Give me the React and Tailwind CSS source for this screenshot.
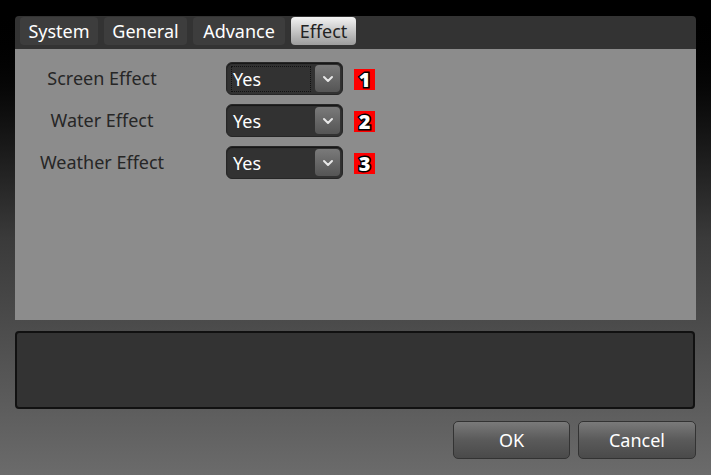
import { ChevronDown } from 'lucide-react'

const tabs = ['System', 'General', 'Advance', 'Effect']
const tabWidths = { System: 'w-[78px]', General: 'w-[83px]', Advance: 'w-[92px]', Effect: 'w-[65px]' }

const rows = [
  { label: 'Screen Effect', value: 'Yes', n: '1', focused: true },
  { label: 'Water Effect', value: 'Yes', n: '2' },
  { label: 'Weather Effect', value: 'Yes', n: '3' }
]

function Select({ value, focused }) {
  return (
    <div className="w-[117px] h-[33px] rounded-[6px] bg-[#323232] border border-[#262626] shadow-[inset_0_1px_1px_rgba(0,0,0,0.6)] flex flex-row items-center pl-[4px] pr-[2px]">
      <div
        className={`flex-1 h-[26px] flex items-center pl-[1px] ${focused ? 'border border-dotted border-[#111]' : 'border border-transparent'}`}
      >
        <span className="text-white text-[18px] leading-none">{value}</span>
      </div>
      <div className="ml-[4px] w-[25px] h-[27px] rounded-[4px] bg-linear-to-b from-[#7a7a7a] to-[#555] flex items-center justify-center">
        <ChevronDown className="text-[#e8e8e8]" size={16} strokeWidth={3} />
      </div>
    </div>
  )
}

function Badge({ n }) {
  return (
    <div className="w-[21px] h-[21px] bg-[#ff0000] flex items-center justify-center">
      <span className="text-white font-black text-[20px] leading-none [-webkit-text-stroke:3px_#000] [paint-order:stroke_fill]">
        {n}
      </span>
    </div>
  )
}

export default function App() {
  return (
    <div className="w-[711px] h-[475px] bg-linear-to-b from-[#000] via-[#3a3a3a] to-[#6b6b6b] pt-[16px] pl-[15px] pr-[15px] font-['Noto_Sans','Liberation_Sans',sans-serif] overflow-hidden">
      <div className="w-[681px] h-[33px] bg-[#333] rounded-t-[4px] flex flex-row items-start gap-[6px] pl-[5px] pt-[1px]">
        {tabs.map((t) => (
          <div
            key={t}
            className={`${tabWidths[t]} h-[28px] rounded-[4px] flex items-center justify-center text-[18px] ${
              t === 'Effect'
                ? 'bg-linear-to-b from-[#f4f4f4] to-[#9c9c9c] text-[#222]'
                : 'bg-[#3d3d3d] text-white'
            }`}
          >
            {t}
          </div>
        ))}
      </div>

      <div className="w-[681px] h-[271px] bg-[#8c8c8c] pt-[13px] flex flex-col gap-[9px]">
        {rows.map((r) => (
          <div key={r.label} className="flex flex-row items-center h-[33px]">
            <div className="w-[174px] text-center text-[#262626] text-[18px]">{r.label}</div>
            <div className="ml-[37px]">
              <Select value={r.value} focused={r.focused} />
            </div>
            <div className="ml-[11px] mt-[2px]">
              <Badge n={r.n} />
            </div>
          </div>
        ))}
      </div>

      <div className="mt-[11px] w-[680px] h-[78px] bg-[#333] border-2 border-[#111] rounded-[4px]" />

      <div className="mt-[12px] w-[681px] flex flex-row justify-end gap-[8px]">
        <button className="w-[117px] h-[38px] rounded-[5px] border border-[#333] bg-linear-to-b from-[#7a7a7a] via-[#5a5a5a] to-[#4a4a4a] text-white text-[18px]">
          OK
        </button>
        <button className="w-[118px] h-[38px] rounded-[5px] border border-[#333] bg-linear-to-b from-[#7a7a7a] via-[#5a5a5a] to-[#4a4a4a] text-white text-[18px]">
          Cancel
        </button>
      </div>
    </div>
  )
}
